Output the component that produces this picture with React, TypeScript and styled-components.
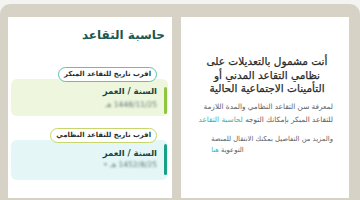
import React from "react";
import styled, { createGlobalStyle } from "styled-components";

const Global = createGlobalStyle`
  html, body { margin: 0; padding: 0; background: #f3f3f1; }
  body { width: 360px; height: 200px; overflow: hidden; font-family: "DejaVu Sans", "Noto Sans", sans-serif; }
`;

const Frame = styled.div`
  margin-top: 4px;
  height: 196px;
  box-sizing: border-box;
  background: #d6d2c6;
  border-radius: 10px 10px 0 0;
  padding: 13px 11px 2px 8px;
  display: flex;
  flex-direction: row;
  gap: 9px;
  direction: ltr;
`;

const LeftPanel = styled.section`
  width: 164px;
  background: #ffffff;
  box-sizing: border-box;
  padding: 9px 4px 0 3px;
  direction: rtl;
  display: flex;
  flex-direction: column;
`;

const RightPanel = styled.section`
  width: 168px;
  background: #ffffff;
  box-sizing: border-box;
  padding: 38px 16px 0 20px;
  direction: rtl;
  display: flex;
  flex-direction: column;
`;

const Title = styled.h2`
  margin: 0;
  padding-right: 3px;
  font-size: 12px;
  line-height: 18px;
  font-weight: 700;
  color: #1c5751;
  text-align: right;
`;

const Section = styled.div<{ $top: number }>`
  margin-top: ${(p) => p.$top}px;
  display: flex;
  flex-direction: column;
  align-items: flex-start;
`;

const Pill = styled.div<{ $border: string }>`
  position: relative;
  z-index: 1;
  margin-right: 11px;
  height: 15px;
  box-sizing: border-box;
  padding: 0 5px;
  border: 1.5px solid ${(p) => p.$border};
  border-radius: 8px;
  background: #ffffff;
  font-size: 6.9px;
  line-height: 12px;
  font-weight: 700;
  color: #26302f;
  white-space: nowrap;
`;

const Card = styled.div<{ $bg: string; $h: number }>`
  align-self: stretch;
  margin-top: -3px;
  height: ${(p) => p.$h}px;
  background: ${(p) => p.$bg};
  border-radius: 6px;
  padding-right: 1px;
  display: flex;
  flex-direction: row;
`;

const Bar = styled.div<{ $color: string; $t: number; $b: number }>`
  width: 3px;
  margin: ${(p) => p.$t}px 0 ${(p) => p.$b}px 0;
  background: ${(p) => p.$color};
  border-radius: 2px;
`;

const CardBody = styled.div<{ $pt: number; $gap: number }>`
  padding: ${(p) => p.$pt}px 7px 0 0;
  display: flex;
  flex-direction: column;
  gap: ${(p) => p.$gap}px;
`;

const Label = styled.div`
  font-size: 8.5px;
  line-height: 12px;
  font-weight: 700;
  color: #1a4744;
`;

const Value = styled.div`
  font-size: 7.5px;
  line-height: 12px;
  color: #5d7877;
  filter: blur(0.8px);
  white-space: nowrap;
`;

const Heading = styled.h1`
  margin: 0;
  font-size: 10.5px;
  line-height: 13.5px;
  font-weight: 400;
  color: #2a2a2a;
  text-align: center;
  white-space: nowrap;
  -webkit-text-stroke: 0.25px #2a2a2a;
`;

const Para = styled.p<{ $top: number; $lh: number; $align: string; $size: number }>`
  margin: ${(p) => p.$top}px 0 0 0;
  align-self: flex-start;
  font-size: ${(p) => p.$size}px;
  line-height: ${(p) => p.$lh}px;
  color: #5e5e5e;
  text-align: ${(p) => p.$align};
  white-space: nowrap;
`;

const Link = styled.span`
  color: #3fb1a4;
`;

export default function App() {
  return (
    <>
      <Global />
      <Frame>
        <LeftPanel>
          <Title>حاسبة التقاعد</Title>
          <Section $top={23}>
            <Pill $border="#5cc3b4">اقرب تاريخ للتقاعد المبكر</Pill>
            <Card $bg="#eef6dd" $h={37}>
              <Bar $color="#8dc63f" $t={8} $b={2} />
              <CardBody $pt={6} $gap={2}>
                <Label>السنة / العمر</Label>
                <Value>1448/11/25 هـ</Value>
              </CardBody>
            </Card>
          </Section>
          <Section $top={12}>
            <Pill $border="#c8d56c">اقرب تاريخ للتقاعد النظامي</Pill>
            <Card $bg="#e4f7f6" $h={40}>
              <Bar $color="#16a287" $t={4} $b={5} />
              <CardBody $pt={7} $gap={0}>
                <Label>السنة / العمر</Label>
                <Value>1452/8/25 هـ •</Value>
              </CardBody>
            </Card>
          </Section>
        </LeftPanel>
        <RightPanel>
          <Heading>
            أنت مشمول بالتعديلات على
            <br />
            نظامي التقاعد المدني أو
            <br />
            التأمينات الاجتماعية الحالية
          </Heading>
          <Para $top={4} $lh={13} $align="right" $size={7.3}>
            لمعرفة سن التقاعد النظامي والمدة اللازمة
            <br />
            للتقاعد المبكر بإمكانك التوجه <Link>لحاسبة التقاعد</Link>
          </Para>
          <Para $top={8} $lh={11.5} $align="left" $size={6.8}>
            والمزيد من التفاصيل بمكنك الانتقال للمنصة
            <br />
            التوعوية <Link>هنا</Link>
          </Para>
        </RightPanel>
      </Frame>
    </>
  );
}
